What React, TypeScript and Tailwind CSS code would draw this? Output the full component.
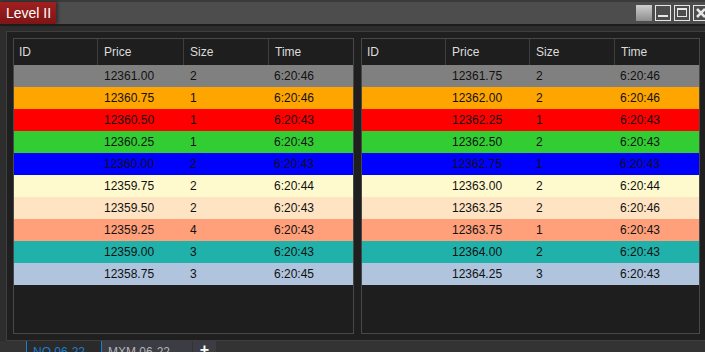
import React from "react";

type Row = { price: string; size: string; time: string; bg: string };

const left: Row[] = [
  { price: "12361.00", size: "2", time: "6:20:46", bg: "bg-[#808080]" },
  { price: "12360.75", size: "1", time: "6:20:46", bg: "bg-[#ffa500]" },
  { price: "12360.50", size: "1", time: "6:20:43", bg: "bg-[#ff0000]" },
  { price: "12360.25", size: "1", time: "6:20:43", bg: "bg-[#32cd32]" },
  { price: "12360.00", size: "2", time: "6:20:43", bg: "bg-[#0000ff]" },
  { price: "12359.75", size: "2", time: "6:20:44", bg: "bg-[#fffacd]" },
  { price: "12359.50", size: "2", time: "6:20:43", bg: "bg-[#ffe4c4]" },
  { price: "12359.25", size: "4", time: "6:20:43", bg: "bg-[#ffa07a]" },
  { price: "12359.00", size: "3", time: "6:20:43", bg: "bg-[#20b2aa]" },
  { price: "12358.75", size: "3", time: "6:20:45", bg: "bg-[#b0c4de]" },
];

const right: Row[] = [
  { price: "12361.75", size: "2", time: "6:20:46", bg: "bg-[#808080]" },
  { price: "12362.00", size: "2", time: "6:20:46", bg: "bg-[#ffa500]" },
  { price: "12362.25", size: "1", time: "6:20:43", bg: "bg-[#ff0000]" },
  { price: "12362.50", size: "2", time: "6:20:43", bg: "bg-[#32cd32]" },
  { price: "12362.75", size: "1", time: "6:20:43", bg: "bg-[#0000ff]" },
  { price: "12363.00", size: "2", time: "6:20:44", bg: "bg-[#fffacd]" },
  { price: "12363.25", size: "2", time: "6:20:46", bg: "bg-[#ffe4c4]" },
  { price: "12363.75", size: "1", time: "6:20:43", bg: "bg-[#ffa07a]" },
  { price: "12364.00", size: "2", time: "6:20:43", bg: "bg-[#20b2aa]" },
  { price: "12364.25", size: "3", time: "6:20:43", bg: "bg-[#b0c4de]" },
];

function Table({ rows, cols, width }: { rows: Row[]; cols: string; width: string }) {
  return (
    <div className={`${width} h-[296px] border border-[#484848] bg-[#1e1e1e] flex flex-col`}>
      <div className={`grid ${cols} h-[26px] text-[12px] text-[#dcdcdc]`}>
        <div className="pl-[5px] flex items-center">ID</div>
        <div className="pl-[6px] flex items-center border-l border-[#3e3e3e]">Price</div>
        <div className="pl-[6px] flex items-center border-l border-[#3e3e3e]">Size</div>
        <div className="pl-[6px] flex items-center border-l border-[#3e3e3e]">Time</div>
      </div>
      {rows.map((r, i) => (
        <div key={i} className={`grid ${cols} h-[22px] text-[12px] text-[#111] ${r.bg}`}>
          <div />
          <div className="pl-[7px] flex items-center">{r.price}</div>
          <div className="pl-[7px] flex items-center">{r.size}</div>
          <div className="pl-[6px] flex items-center">{r.time}</div>
        </div>
      ))}
    </div>
  );
}

export default function App() {
  return (
    <div
      className="w-[705px] h-[352px] bg-[#2d2d2d] flex flex-col overflow-hidden"
      style={{ fontFamily: '"Liberation Sans", Arial, sans-serif' }}
    >
      {/* title bar */}
      <div className="h-[24px] shrink-0 bg-[#4d4d4d] border-t-2 border-[#3a3a3a] flex items-stretch justify-between">
        <div className="w-[56px] bg-gradient-to-b from-[#a02020] to-[#7e1515] text-white text-[14px] pl-[6px] flex items-center shadow-[2px_0_3px_rgba(0,0,0,0.4)]">
          Level II
        </div>
        <div className="flex items-center gap-[3px] pr-0 -mr-[4px] pb-[1px]">
          <div className="w-[16px] h-[16px] bg-gradient-to-b from-[#cfcfcf] to-[#8e8e8e]" />
          <div className="w-[16px] h-[16px] border border-[#e6e6e6] flex items-end justify-center pb-[3px]">
            <div className="w-[10px] h-[2px] bg-[#e6e6e6]" />
          </div>
          <div className="w-[16px] h-[16px] border border-[#e6e6e6] flex justify-center pt-[2px]">
            <div className="w-[10px] h-[9px] border border-[#e6e6e6] border-t-2" />
          </div>
          <div className="w-[16px] h-[16px] border border-[#e6e6e6] flex items-center justify-center">
            <svg width="12" height="12" viewBox="0 0 12 12">
              <path d="M2 2 L10 10 M10 2 L2 10" stroke="#e6e6e6" strokeWidth="2.5" />
            </svg>
          </div>
        </div>
      </div>
      <div className="h-[2px] shrink-0 bg-[#1c1c1c]" />
      {/* body */}
      <div className="pl-[6px] pt-[5px] shrink-0">
        <div className="w-[720px] h-[310px] border border-[#3e3e3e] bg-[#1f1f1f] pl-[6px] pt-[6px] flex gap-[7px]">
          <Table rows={left} cols="grid-cols-[83px_86px_85px_1fr]" width="w-[341px]" />
          <Table rows={right} cols="grid-cols-[83px_84px_85px_1fr]" width="w-[339px]" />
        </div>
      </div>
      {/* tabs */}
      <div className="flex-1 bg-[#333333] flex pl-[26px]">
        <div className="w-[76px] h-[24px] bg-[#2a2a2a] border-l border-r border-[#1a7fd4] text-[#1a7fd4] text-[12px] pl-[6px] pt-[2px]">
          NQ 06-22
        </div>
        <div className="w-[90px] h-[24px] bg-[#3c3c44] text-[#b4b4b4] text-[12px] pl-[6px] pt-[2px]">
          MXM 06-22
        </div>
        <div className="w-[23px] h-[24px] ml-[1px] bg-[#3c3c44] text-white text-[16px] leading-none flex justify-center pt-[1px] font-bold">
          +
        </div>
      </div>
    </div>
  );
}
